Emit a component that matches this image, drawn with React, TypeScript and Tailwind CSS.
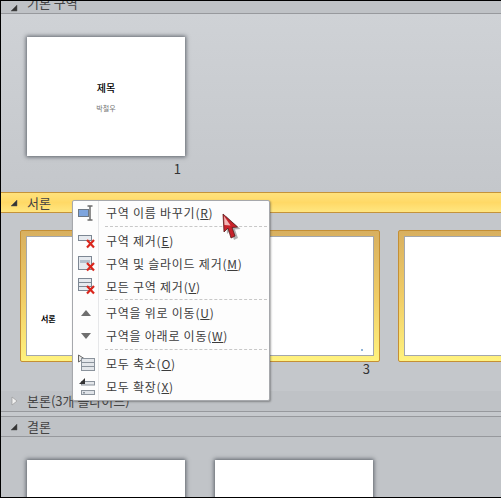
import React from 'react';

const font = "font-['Noto_Sans_CJK_KR','Liberation_Sans',sans-serif]";

const Collapse: React.FC<{ open?: boolean }> = ({ open = true }) =>
  open ? (
    <svg width="8" height="8" viewBox="0 0 8 8" className="shrink-0">
      <path d="M7 1 L7 7 L1 7 Z" fill="#333" stroke="#555" strokeWidth="0.5" />
    </svg>
  ) : (
    <svg width="8" height="10" viewBox="0 0 8 10" className="shrink-0">
      <path d="M2 1 L7 5 L2 9 Z" fill="#f2f2f2" stroke="#9a9a9a" strokeWidth="0.7" />
    </svg>
  );

const Thumb: React.FC<{ children?: React.ReactNode; num?: string }> = ({ children, num }) => (
  <div className="w-[158px] shrink-0">
    <div className="h-[119px] bg-white shadow-[0_0_4px_1px_rgba(60,65,75,0.75)]">{children}</div>
    {num && <div className="mt-[5px] pr-[4px] text-right text-[13px] leading-[16px] text-[#333]">{num}</div>}
  </div>
);

const SelectedThumb: React.FC<{ children?: React.ReactNode; num?: string }> = ({ children, num }) => (
  <div className="w-[171px] shrink-0">
    <div className="h-[132px] rounded-[2px] border border-[#c48f35] bg-gradient-to-b from-[#d8b060] via-[#f0cc66] to-[#fff27e] p-[5px]">
      <div className="h-[120px] border border-[#a3a7ad] bg-white">{children}</div>
    </div>
    {num && <div className="mt-[-1px] pr-[10px] text-right text-[13px] leading-[16px] text-[#333]">{num}</div>}
  </div>
);

const SlideIcon: React.FC<{ lines?: number }> = ({ lines = 1 }) => (
  <svg width="20" height="18" viewBox="0 0 20 18">
    {lines === 1 && <rect x="2.5" y="3.5" width="13" height="5" fill="#e6eaef" stroke="#7d8793" />}
    {lines === 2 && <rect x="2.5" y="1.5" width="13" height="13" fill="#e6eaef" stroke="#7d8793" />}
    {lines === 2 && <rect x="4" y="5" width="10" height="3" fill="#b3bfcc" />}
    {lines === 3 && <rect x="2.5" y="0.5" width="13" height="12" fill="#e6eaef" stroke="#7d8793" />}
    {lines === 3 && <path d="M3 4.5 H15 M3 8.5 H15" stroke="#7d8793" />}
    <path d="M11 8 L18 15.5 M18 8 L11 15.5" stroke="#d9261c" strokeWidth="2.2" />
  </svg>
);

const RenameIcon = () => (
  <svg width="20" height="18" viewBox="0 0 20 18">
    <rect x="2.5" y="5.5" width="10" height="7" fill="#7ea5de" stroke="#6d7885" />
    <path d="M14 2.5 V15.5 M11.5 2 H16.5 M11.5 16 H16.5" stroke="#222" strokeWidth="1" fill="none" />
  </svg>
);

const ArrowIcon: React.FC<{ up?: boolean }> = ({ up }) => (
  <svg width="12" height="8" viewBox="0 0 12 8">
    <path d={up ? 'M6 1 L11 7 L1 7 Z' : 'M1 1 H11 L6 7 Z'} fill="#6f6f6f" />
  </svg>
);

const CollapseAllIcon = () => (
  <svg width="20" height="20" viewBox="0 0 20 20">
    <path d="M2.5 1 L8 4.5 L2.5 8 Z" fill="#e8e8e8" stroke="#666" />
    <rect x="5.5" y="4.5" width="13" height="12" fill="#e3e6ea" stroke="#8b939c" />
    <path d="M6 8.5 H18 M6 12.5 H18" stroke="#8b939c" />
  </svg>
);

const ExpandAllIcon = () => (
  <svg width="20" height="20" viewBox="0 0 20 20">
    <rect x="5.5" y="4.5" width="13" height="3.5" fill="#e3e6ea" stroke="#8b939c" />
    <path d="M9 1 V7 H3 Z" fill="#333" />
    <rect x="5.5" y="13.5" width="13" height="4" fill="#dfe3e8" stroke="#8b939c" />
    <rect x="7" y="15" width="2" height="1.5" fill="#8b939c" />
  </svg>
);

const MenuItem: React.FC<{ icon: React.ReactNode; label: string; hot: string }> = ({ icon, label, hot }) => (
  <div className="flex h-[23px] items-center">
    <div className="flex w-[25px] shrink-0 items-center justify-center">{icon}</div>
    <div className="ml-[8px] text-[12px] leading-[23px] tracking-[0.75px] whitespace-nowrap text-[#3c3c3c]">
      {label}(<u>{hot}</u>)
    </div>
  </div>
);

const MenuSep: React.FC<{ h: string }> = ({ h }) => (
  <div className={`flex items-center pl-[32px] pr-[2px] ${h}`}>
    <div className="w-full border-t border-dashed border-[#c8c8c8]" />
  </div>
);

export default function App() {
  return (
    <div className={`relative h-[498px] w-[501px] overflow-hidden border-t border-b border-l border-black bg-[#c6c9cd] ${font}`}>
      {/* 기본 구역 */}
      <div className="flex h-[13px] items-end gap-[9px] overflow-hidden border-b border-[#97999d] bg-[#bfc2c6] pb-[1px] pl-[9px] leading-[18px] text-[#444]">
        <Collapse />
        <span className="text-[13px]">기본 구역</span>
      </div>
      <div className="h-[178px] bg-gradient-to-b from-[#cfd2d6] to-[#c4c7cb] pt-[23px] pl-[26px]">
        <Thumb num="1">
          <div className="flex h-full flex-col items-center pt-[44px]">
            <div className="text-[10px] leading-[14px] font-medium text-black">제목</div>
            <div className="mt-[9px] text-[7px] leading-[8px] text-[#777]">박철우</div>
          </div>
        </Thumb>
      </div>

      {/* 서론 */}
      <div className="flex h-[21px] items-center gap-[9px] border-y border-[#c4933a] bg-gradient-to-b from-[#ffe27c] via-[#ffd966] to-[#ffe680] pl-[9px] text-[13px] text-[#444]">
        <Collapse />
        <span>서론</span>
      </div>
      <div className="flex h-[178px] gap-[18px] overflow-hidden bg-[#c4c7cb] pt-[17px] pl-[19px]">
        <SelectedThumb>
          <div className="pt-[76px] pl-[14px] text-[8px] leading-[12px] font-bold text-black">서론</div>
        </SelectedThumb>
        <SelectedThumb num="3">
          <div className="flex h-full items-end justify-end pr-[10px] pb-[4px]">
            <div className="size-[2px] bg-[#8fb4d8]" />
          </div>
        </SelectedThumb>
        <SelectedThumb />
      </div>

      {/* 본론 */}
      <div className="flex h-[21px] items-center gap-[9px] border-b border-[#97999d] bg-[#bfc2c6] pl-[9px] text-[13px] text-[#444]">
        <Collapse open={false} />
        <span>본론(3개 슬라이드)</span>
      </div>
      <div className="h-[5px] border-b border-[#97999d] bg-[#c6c9cd]" />

      {/* 결론 */}
      <div className="flex h-[20px] items-center gap-[9px] border-b border-[#97999d] bg-[#bfc2c6] pl-[9px] text-[13px] text-[#444]">
        <Collapse />
        <span>결론</span>
      </div>
      <div className="flex h-[60px] gap-[30px] bg-[#c1c4c8] pt-[23px] pl-[26px]">
        <Thumb />
        <Thumb />
      </div>

      {/* context menu */}
      <div className="absolute top-[199px] left-[71px] w-[198px] rounded-[2px] border border-[#a6a8ac] bg-[#fdfdfd] pb-[2px] shadow-[1px_1px_2px_rgba(60,60,60,0.45)]">
        <div className="absolute top-0 bottom-0 left-[25px] w-px bg-[#e6e7e9]" />
        <MenuItem icon={<RenameIcon />} label="구역 이름 바꾸기" hot="R" />
        <MenuSep h="h-[5px]" />
        <MenuItem icon={<SlideIcon />} label="구역 제거" hot="E" />
        <MenuItem icon={<SlideIcon lines={2} />} label="구역 및 슬라이드 제거" hot="M" />
        <MenuItem icon={<SlideIcon lines={3} />} label="모든 구역 제거" hot="V" />
        <MenuSep h="h-[3px]" />
        <MenuItem icon={<ArrowIcon up />} label="구역을 위로 이동" hot="U" />
        <MenuItem icon={<ArrowIcon />} label="구역을 아래로 이동" hot="W" />
        <MenuSep h="h-[5px]" />
        <MenuItem icon={<CollapseAllIcon />} label="모두 축소" hot="O" />
        <MenuItem icon={<ExpandAllIcon />} label="모두 확장" hot="X" />
      </div>

      {/* mouse pointer */}
      <svg width="28" height="32" viewBox="0 0 28 32" className="absolute top-[211px] left-[220px]">
        <path d="M2 2 L3 20 L7 16 L10 26 L14 24 L11 15.5 L16.5 15 Z" fill="#000" opacity="0.3" transform="translate(3 2)" />
        <path d="M2 2 L3 20 L7 16 L10 26 L14 24 L11 15.5 L16.5 15 Z" fill="#c8222a" stroke="#5a1a1a" strokeWidth="0.8" />
        <path d="M3 4 L3.5 13 L9.5 13.5 Z" fill="#f2b5b5" />
      </svg>
    </div>
  );
}
